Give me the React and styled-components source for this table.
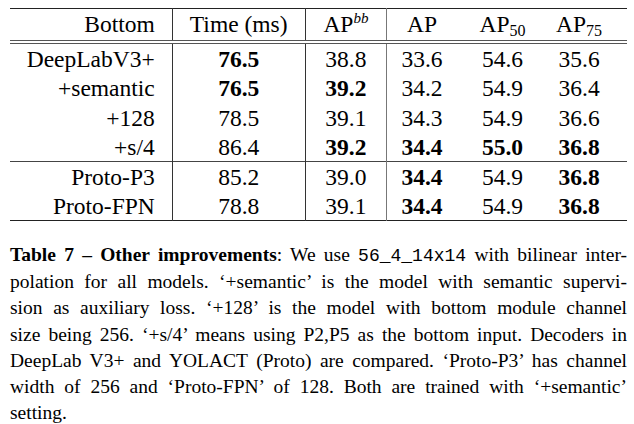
import React from 'react'
import styled, { createGlobalStyle } from 'styled-components'

const GlobalStyle = createGlobalStyle`
  body {
    margin: 0;
    background: #fff;
    color: #000;
    font-family: "Liberation Serif", "Times New Roman", serif;
  }
`

const rows = [
  { name: 'DeepLabV3+', vals: ['76.5', '38.8', '33.6', '54.6', '35.6'], bold: [0] },
  { name: '+semantic', vals: ['76.5', '39.2', '34.2', '54.9', '36.4'], bold: [0, 1] },
  { name: '+128', vals: ['78.5', '39.1', '34.3', '54.9', '36.6'], bold: [] },
  { name: '+s/4', vals: ['86.4', '39.2', '34.4', '55.0', '36.8'], bold: [1, 2, 3, 4] },
  { name: 'Proto-P3', vals: ['85.2', '39.0', '34.4', '54.9', '36.8'], bold: [2, 4], rule: true },
  { name: 'Proto-FPN', vals: ['78.8', '39.1', '34.4', '54.9', '36.8'], bold: [2, 4] },
]

const Page = styled.div`
  width: 617px;
  padding: 8px 7px 0 10px;
  font-family: "Liberation Serif", "Times New Roman", serif;
`

const Table = styled.table`
  width: 617px;
  border-collapse: collapse;
  border-top: 1px solid #222;
  border-bottom: 1px solid #222;
  font-family: "Liberation Serif", "Times New Roman", serif;
  font-size: 23.5px;
`

// shared column rules: widths, alignment and the vertical rules
const colRules = `
  &:nth-child(1) { width: 145px; text-align: right; padding-right: 17px; border-right: 1px solid #333; }
  &:nth-child(2) { width: 133px; border-right: 1px solid #333; }
  &:nth-child(3) { width: 81px; border-right: 1px solid #777; }
  &:nth-child(4) { width: 70px; }
  &:nth-child(5) { width: 92px; }
  &:nth-child(6) { width: 62px; padding-right: 17px; }
`

const HeadCell = styled.th`
  height: 31px;
  padding: 0;
  font-family: "Liberation Serif", "Times New Roman", serif;
  font-weight: normal;
  text-align: center;
  border-bottom: 4px double #555;
  ${colRules}
`

const Row = styled.tr`
  height: 29.5px;
  border-top: ${p => (p.$rule ? '1px solid #444' : 'none')};
`

const Cell = styled.td`
  padding: 2px 0 0;
  font-family: "Liberation Serif", "Times New Roman", serif;
  text-align: center;
  font-weight: ${p => (p.$bold ? 'bold' : 'normal')};
  ${colRules}
`

const Sup = styled.sup`
  font-family: "Liberation Serif", "Times New Roman", serif;
  font-style: italic;
  font-size: 15px;
  vertical-align: 9px;
  line-height: 0;
`

const Sub = styled.sub`
  font-family: "Liberation Serif", "Times New Roman", serif;
  font-size: 16px;
  vertical-align: -4px;
  line-height: 0;
`

const Caption = styled.div`
  margin-top: 21px;
  font-family: "Liberation Serif", "Times New Roman", serif;
  font-size: 19.5px;
  line-height: 26.2px;
`

const Line = styled.div`
  font-family: "Liberation Serif", "Times New Roman", serif;
  text-align: ${p => (p.$last ? 'left' : 'justify')};
  text-align-last: ${p => (p.$last ? 'left' : 'justify')};
`

const Bold = styled.b`
  font-family: "Liberation Serif", "Times New Roman", serif;
  font-weight: bold;
`

const Code = styled.code`
  font-family: "Liberation Mono", "Courier New", monospace;
  font-size: 18px;
`

const headers = [
  'Bottom',
  'Time (ms)',
  <>AP<Sup>bb</Sup></>,
  'AP',
  <>AP<Sub>50</Sub></>,
  <>AP<Sub>75</Sub></>,
]

export default function App() {
  return (
    <Page>
      <GlobalStyle />
      <Table>
        <thead>
          <tr>
            {headers.map((h, i) => (
              <HeadCell key={i}>{h}</HeadCell>
            ))}
          </tr>
        </thead>
        <tbody>
          {rows.map(r => (
            <Row key={r.name} $rule={r.rule}>
              <Cell>{r.name}</Cell>
              {r.vals.map((v, i) => (
                <Cell key={i} $bold={r.bold.includes(i)}>{v}</Cell>
              ))}
            </Row>
          ))}
        </tbody>
      </Table>
      <Caption>
        <Line>
          <Bold>Table 7 – Other improvements</Bold>: We use <Code>56_4_14x14</Code> with bilinear inter-
        </Line>
        <Line>polation for all models. ‘+semantic’ is the model with semantic supervi-</Line>
        <Line>sion as auxiliary loss. ‘+128’ is the model with bottom module channel</Line>
        <Line>size being 256. ‘+s/4’ means using P2,P5 as the bottom input. Decoders in</Line>
        <Line>DeepLab V3+ and YOLACT (Proto) are compared. ‘Proto-P3’ has channel</Line>
        <Line>width of 256 and ‘Proto-FPN’ of 128. Both are trained with ‘+semantic’</Line>
        <Line $last>setting.</Line>
      </Caption>
    </Page>
  )
}
